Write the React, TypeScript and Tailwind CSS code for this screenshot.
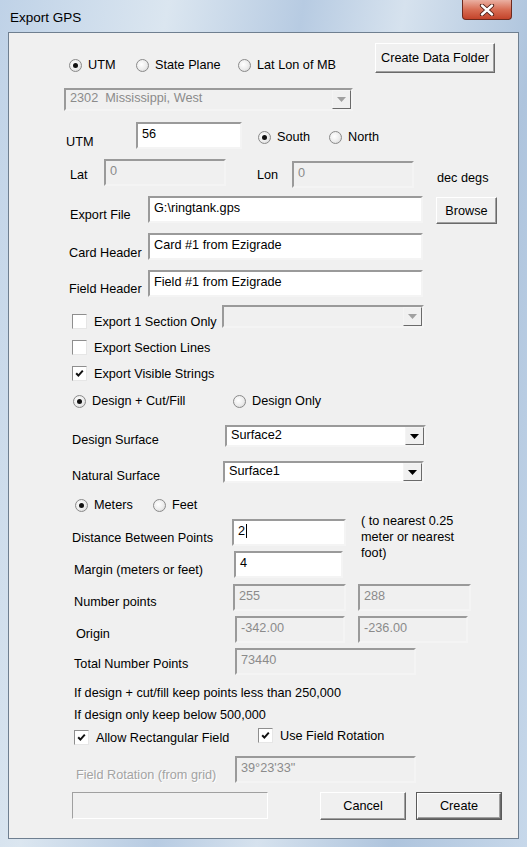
import React from "react";

type BoxProps = {
  w: string;
  h?: string;
  value?: string;
  disabled?: boolean;
  caret?: boolean;
};

function Radio({ checked, label }: { checked?: boolean; label: string }) {
  return (
    <div className="flex h-[14px] items-center">
      <span className="flex h-[13px] w-[13px] shrink-0 items-center justify-center rounded-full border border-[#8a8a8a] bg-[radial-gradient(circle_at_40%_40%,#ffffff,#ececec_55%,#cdcdcd)]">
        {checked && <span className="h-[5px] w-[5px] rounded-full bg-[#111]" />}
      </span>
      <span className="ml-[6px] whitespace-nowrap">{label}</span>
    </div>
  );
}

function Check({ checked, label }: { checked?: boolean; label: string }) {
  return (
    <div className="flex h-[15px] items-center">
      <span className="flex h-[15px] w-[15px] shrink-0 items-center justify-center border border-t-[#8e8e8e] border-l-[#8e8e8e] border-b-[#e6e6e6] border-r-[#e6e6e6] bg-white">
        {checked && (
          <svg width="9" height="9" viewBox="0 0 9 9">
            <path d="M1.2 4.2 L3.4 6.6 L7.8 1.6" fill="none" stroke="#111" strokeWidth="2" />
          </svg>
        )}
      </span>
      <span className="ml-[7px] whitespace-nowrap">{label}</span>
    </div>
  );
}

function TextBox({ w, h = "h-[27px]", value, disabled, caret }: BoxProps) {
  return (
    <div
      className={`${w} ${h} shrink-0 border-2 border-t-[#9a9a9a] border-l-[#9a9a9a] border-b-[#f4f4f4] border-r-[#f4f4f4] pl-[4px] pt-[3px] ${
        disabled ? "bg-[#f0f0f0] text-[#8b8b8b]" : "bg-white text-black"
      }`}
    >
      <span className="flex items-center whitespace-pre">
        {value}
        {caret && <span className="ml-[1px] h-[14px] w-px bg-black" />}
      </span>
    </div>
  );
}

function Combo({ w, h = "h-[23px]", value, disabled }: BoxProps) {
  return (
    <div
      className={`${w} ${h} flex shrink-0 items-stretch border-2 border-t-[#9a9a9a] border-l-[#9a9a9a] border-b-[#f4f4f4] border-r-[#f4f4f4] ${
        disabled ? "bg-[#f0f0f0] text-[#8b8b8b]" : "bg-white text-black"
      }`}
    >
      <span className="flex-1 whitespace-pre pl-[4px] pt-[1px]">{value}</span>
      <span className="flex w-[19px] items-center justify-center border border-t-[#f4f4f4] border-l-[#f4f4f4] border-b-[#6a6a6a] border-r-[#6a6a6a] bg-[#f0f0f0]">
        <svg width="9" height="5" viewBox="0 0 9 5">
          <polygon points="0,0 9,0 4.5,5" fill={disabled ? "#a0a0a0" : "#000"} />
        </svg>
      </span>
    </div>
  );
}

function Btn({ w, h = "h-[28px]", label, main }: { w: string; h?: string; label: string; main?: boolean }) {
  return (
    <div className={`${w} ${h} shrink-0 ${main ? "border border-[#5a5a5a]" : ""}`}>
      <div className="flex h-full w-full items-center justify-center border border-t-white border-l-white border-b-[#6a6a6a] border-r-[#6a6a6a] bg-[#f0f0f0] shadow-[inset_-1px_-1px_0_#a0a0a0]">
        {label}
      </div>
    </div>
  );
}

export default function App() {
  return (
    <div className="h-[847px] w-[527px] overflow-hidden bg-[linear-gradient(100deg,#bfd2e7,#dbe6f0_25%,#b7cbe2_45%,#d6e2ee_60%,#aec4dd_80%,#c7d8ea)] font-['Liberation_Sans',Arial,sans-serif] text-[12.7px] leading-[14px] text-black">
      {/* title bar */}
      <div className="flex h-[32px] items-start">
        <span className="ml-[10px] mt-[10px] text-[13.5px] leading-[15px] text-black">Export GPS</span>
        <div className="ml-auto mr-[15px] flex h-[20px] w-[50px] items-center justify-center rounded-b-[4px] border border-t-0 border-[#6e2a1e] bg-[linear-gradient(#eab0a2,#d86e55_50%,#c3432a)]">
          <svg width="16" height="12" viewBox="0 0 16 12">
            <path d="M3 1.5 L13 10.5 M13 1.5 L3 10.5" stroke="#4a1a12" strokeWidth="4.2" strokeLinecap="round" />
            <path d="M3 1.5 L13 10.5 M13 1.5 L3 10.5" stroke="#ffffff" strokeWidth="2.4" strokeLinecap="round" />
          </svg>
        </div>
      </div>

      {/* client frame */}
      <div className="ml-[8px] h-[807px] w-[511px] border border-[#6f7f90] bg-[#f0f0f0]">
        {/* coordinate system radios */}
        <div className="mt-[10px] flex h-[30px] items-start">
          <div className="ml-[60px] mt-[15px] flex">
            <div className="w-[67px]"><Radio checked label="UTM" /></div>
            <div className="w-[102px]"><Radio label="State Plane" /></div>
            <div className="w-[137px]"><Radio label="Lat Lon of MB" /></div>
          </div>
          <Btn w="w-[120px]" h="h-[30px]" label="Create Data Folder" />
        </div>

        <div className="mt-[15px] flex h-[23px]">
          <div className="ml-[55px]">
            <Combo w="w-[289px]" value="2302  Mississippi, West" disabled />
          </div>
        </div>

        {/* UTM zone */}
        <div className="mt-[11px] flex h-[27px] items-start">
          <span className="ml-[57px] mt-[13px] w-[70px]">UTM</span>
          <TextBox w="w-[106px]" value="56" />
          <div className="ml-[16px] mt-[8px] w-[71px]"><Radio checked label="South" /></div>
          <div className="mt-[8px]"><Radio label="North" /></div>
        </div>

        {/* lat lon */}
        <div className="mt-[10px] flex h-[29px] items-start">
          <span className="ml-[61px] mt-[9px] w-[34px]">Lat</span>
          <TextBox w="w-[122px]" value="0" disabled />
          <span className="ml-[31px] mt-[9px] w-[35px]">Lon</span>
          <div className="mt-[2px]"><TextBox w="w-[122px]" value="0" disabled /></div>
          <span className="ml-[23px] mt-[12px]">dec degs</span>
        </div>

        {/* export file */}
        <div className="mt-[8px] flex h-[28px] items-start">
          <span className="ml-[61px] mt-[12px] w-[78px]">Export File</span>
          <TextBox w="w-[275px]" value="G:\ringtank.gps" />
          <div className="ml-[13px] mt-[1px]"><Btn w="w-[61px]" h="h-[27px]" label="Browse" /></div>
        </div>

        <div className="mt-[9px] flex h-[27px] items-start">
          <span className="ml-[60px] mt-[13px] w-[79px]">Card Header</span>
          <TextBox w="w-[275px]" value="Card #1 from Ezigrade" />
        </div>

        <div className="mt-[10px] flex h-[27px] items-start">
          <span className="ml-[60px] mt-[12px] w-[79px]">Field Header</span>
          <TextBox w="w-[275px]" value="Field #1 from Ezigrade" />
        </div>

        {/* export options */}
        <div className="mt-[8px] flex h-[23px] items-start">
          <div className="ml-[63px] mt-[9px] w-[150px]"><Check label="Export 1 Section Only" /></div>
          <Combo w="w-[202px]" disabled />
        </div>
        <div className="ml-[63px] mt-[12px] h-[15px]"><Check label="Export Section Lines" /></div>
        <div className="ml-[63px] mt-[11px] h-[15px]"><Check checked label="Export Visible Strings" /></div>

        <div className="mt-[13px] flex h-[14px]">
          <div className="ml-[64px] w-[160px]"><Radio checked label="Design + Cut/Fill" /></div>
          <Radio label="Design Only" />
        </div>

        {/* surfaces */}
        <div className="mt-[17px] flex h-[22px] items-start">
          <span className="ml-[63px] mt-[8px] w-[153px]">Design Surface</span>
          <Combo w="w-[201px]" h="h-[22px]" value="Surface2" />
        </div>
        <div className="mt-[14px] flex h-[22px] items-start">
          <span className="ml-[63px] mt-[8px] w-[151px]">Natural Surface</span>
          <Combo w="w-[201px]" h="h-[22px]" value="Surface1" />
        </div>

        <div className="mt-[15px] flex h-[14px]">
          <div className="ml-[66px] w-[78px]"><Radio checked label="Meters" /></div>
          <Radio label="Feet" />
        </div>

        {/* spacing */}
        <div className="mt-[1px] flex items-start">
          <div className="mt-[6px] flex w-[337px] flex-col">
            <div className="flex h-[27px] items-start">
              <span className="ml-[63px] mt-[12px] w-[160px]">Distance Between Points</span>
              <TextBox w="w-[114px]" value="2" caret />
            </div>
            <div className="mt-[5px] flex h-[27px] items-start">
              <span className="ml-[65px] mt-[12px] w-[160px]">Margin (meters or feet)</span>
              <TextBox w="w-[109px]" value="4" />
            </div>
          </div>
          <p className="ml-[15px] w-[110px] leading-[16px]">( to nearest 0.25 meter or nearest foot)</p>
        </div>

        <div className="mt-[6px] flex h-[27px] items-start">
          <span className="ml-[65px] mt-[11px] w-[159px]">Number points</span>
          <TextBox w="w-[113px]" value="255" disabled />
          <div className="ml-[12px]"><TextBox w="w-[113px]" value="288" disabled /></div>
        </div>

        <div className="mt-[5px] flex h-[27px] items-start">
          <span className="ml-[67px] mt-[11px] w-[159px]">Origin</span>
          <TextBox w="w-[110px]" value="-342.00" disabled />
          <div className="ml-[13px]"><TextBox w="w-[110px]" value="-236.00" disabled /></div>
        </div>

        <div className="mt-[5px] flex h-[27px] items-start">
          <span className="ml-[65px] mt-[9px] w-[161px]">Total Number Points</span>
          <TextBox w="w-[181px]" value="73440" disabled />
        </div>

        <p className="ml-[65px] mt-[11px] h-[14px]">If design + cut/fill keep points less than 250,000</p>
        <p className="ml-[65px] mt-[8px] h-[14px]">If design only keep below 500,000</p>

        <div className="mt-[6px] flex h-[16px] items-start">
          <div className="ml-[65px] mt-[2px] w-[184px]"><Check checked label="Allow Rectangular Field" /></div>
          <Check checked label="Use Field Rotation" />
        </div>

        <div className="mt-[12px] flex h-[27px] items-start">
          <span className="ml-[67px] mt-[12px] w-[159px] text-[#a3a3a3] [text-shadow:1px_1px_0_#ffffff]">
            Field Rotation (from grid)
          </span>
          <TextBox w="w-[181px]" value={"39°23'33\""} disabled />
        </div>

        <div className="mt-[9px] flex h-[28px] items-start">
          <div className="ml-[63px] h-[27px] w-[196px] border border-t-[#a0a0a0] border-l-[#a0a0a0] border-b-white border-r-white" />
          <div className="ml-[52px]"><Btn w="w-[86px]" label="Cancel" /></div>
          <div className="ml-[10px]"><Btn w="w-[86px]" label="Create" main /></div>
        </div>
      </div>
    </div>
  );
}
